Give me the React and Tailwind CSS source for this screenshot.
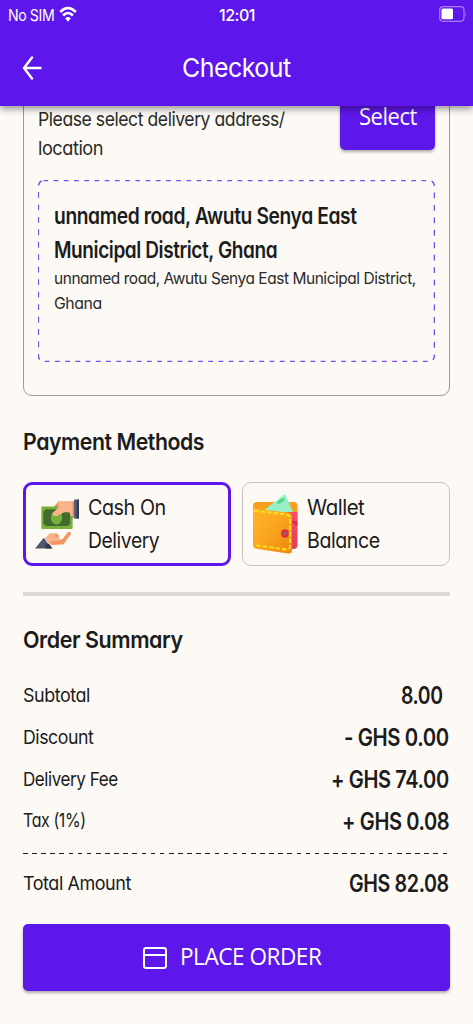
import { useLayoutEffect, useRef, useState } from 'react'
import clsx from 'clsx'

const CHARGES = [
  { label: 'Subtotal', labelWidth: 67, value: '8.00', valueWidth: 42, inset: true },
  { label: 'Discount', labelWidth: 70, value: '- GHS 0.00', valueWidth: 105 },
  { label: 'Delivery Fee', labelWidth: 95, value: '+ GHS 74.00', valueWidth: 118 },
  { label: 'Tax (1%)', labelWidth: 63, value: '+ GHS 0.08', valueWidth: 107 },
]

export default function App() {
  return (
    <div className="flex h-[1024px] w-[473px] flex-col overflow-hidden bg-[#fdfaf5] font-['Inter',sans-serif] tracking-[-0.03em] text-[#1c1c1c] [font-feature-settings:'cv11']">
      <Header />
      <main className="-mt-4 flex flex-col px-[23px]">
        <AddressCard />

        <h2 className="mt-[29px] h-[34px] text-[23.5px] leading-[34px] font-semibold"><Line width={181}>Payment Methods</Line></h2>
        <div className="mt-[23px] grid grid-cols-2 gap-[11px]">
          <Method icon={<CashIcon />} lines={[['Cash On', 78], ['Delivery', 71]]} active />
          <Method icon={<WalletIcon />} lines={[['Wallet', 57], ['Balance', 73]]} />
        </div>
        <div className="mt-[26px] h-1 bg-[#dddbd6]" />

        <h2 className="mt-[27px] h-[34px] text-[23.5px] leading-[34px] font-semibold"><Line width={160}>Order Summary</Line></h2>
        <div className="mt-[18.5px]">
          {CHARGES.map((row) => <Charge key={row.label} {...row} />)}
        </div>
        <div className="mt-2.5 h-[1.5px] bg-[repeating-linear-gradient(90deg,#1c1c1c_0_4.6px,transparent_4.6px_9.12px)]" />
        <div className="mt-[9px]">
          <Charge label="Total Amount" labelWidth={108} value="GHS 82.08" valueWidth={100} />
        </div>

        <button className="mt-[19px] flex h-[67px] items-center rounded-[5px] bg-[#5e17eb] pl-[120px] text-white shadow-[0_2px_3px_rgba(0,0,0,0.3)]">
          <svg width="24" height="24" viewBox="0 0 24 24" fill="none" stroke="currentColor" strokeWidth="2" className="mt-0.5">
            <rect x="1" y="2" width="22" height="20" rx="2.2" />
            <path d="M1 9h22" />
          </svg>
          <span className="-mt-0.5 ml-[13px] font-['Open_Sans',sans-serif] text-[23.5px] leading-8"><Line width={141}>PLACE ORDER</Line></span>
        </button>
      </main>
    </div>
  )
}

// Condenses a single line of text so that it takes exactly `width` pixels.
function Line({ width, children }) {
  const ref = useRef(null)
  const [scale, setScale] = useState(1)

  useLayoutEffect(() => {
    setScale(width / ref.current.offsetWidth)
  }, [width])

  return (
    <span className="block" style={{ width }}>
      <span ref={ref} className="inline-block origin-left whitespace-nowrap" style={{ transform: `scaleX(${scale})` }}>{children}</span>
    </span>
  )
}

function Header() {
  return (
    <header className="relative z-10 h-[106px] shrink-0 bg-[#5e17eb] text-white shadow-[0_3px_7px_rgba(0,0,0,0.4)]">
      <div className="grid h-[30px] grid-cols-[1fr_auto_1fr] items-center pr-[6px] pl-2 text-base leading-5">
        <div className="flex items-center gap-[5px]">
          <Line width={46}>No SIM</Line>
          <svg width="18" height="16" viewBox="0 0 18 16" className="-mt-0.5">
            <g fill="none" stroke="currentColor" strokeWidth="2.7">
              <path d="M1.2 6Q9-2 16.8 6" />
              <path d="M4.1 9.5Q9 4.5 13.9 9.5" />
            </g>
            <path d="M9 15.7 6.2 12.4Q9 9.8 11.8 12.4Z" fill="currentColor" />
          </svg>
        </div>
        <div className="-ml-px font-medium"><Line width={36}>12:01</Line></div>
        <svg width="28" height="16" viewBox="0 0 28 16" className="-mt-0.5 justify-self-end">
          <rect x="0.7" y="0.7" width="24.3" height="14.6" rx="3.5" fill="none" stroke="#a77cf5" strokeWidth="1.2" />
          <rect x="2.5" y="2.6" width="11.5" height="10.6" rx="1.5" fill="#fff" />
          <path d="M26.2 5.6q1.6 2.4 0 4.8Z" fill="#a77cf5" />
        </svg>
      </div>
      <div className="grid h-[76px] grid-cols-[1fr_auto_1fr] items-center px-[22px]">
        <svg width="20" height="24" viewBox="0 0 20 24" fill="none" stroke="currentColor" strokeWidth="2.4" strokeLinecap="round" strokeLinejoin="round">
          <path d="M18.5 12H2M10 1.5 2 12l8 10.5" />
        </svg>
        <h1 className="text-[26px] leading-9"><Line width={109}>Checkout</Line></h1>
      </div>
    </header>
  )
}

function AddressCard() {
  return (
    <section className="h-[306px] rounded-[9px] border border-[#9c9b98] px-[14px]">
      <div className="flex justify-between">
        <div className="pt-[14px] text-[19px] leading-[29px] text-[#2a2a2a]">
          <Line width={247}>Please select delivery address/</Line>
          <Line width={65}>location</Line>
        </div>
        <button className="flex h-[59px] w-[95px] items-center justify-center rounded-[5px] bg-[#5e17eb] font-['Open_Sans',sans-serif] text-[23.5px] leading-8 text-white shadow-[0_2px_3px_rgba(0,0,0,0.3)]">
          <span className="-mt-2.5"><Line width={58}>Select</Line></span>
        </button>
      </div>
      <div className="relative mt-[17px] h-[182px] px-4 pt-[19px]">
        <svg className="absolute inset-0 size-full" viewBox="0 0 399 150" preserveAspectRatio="none" fill="none" stroke="#7c4cf0" strokeWidth="1.4">
          <rect x="0.4" y="0.4" width="398" height="149.2" rx="5" strokeDasharray="4.8 5.47" />
        </svg>
        <div className="text-[22.5px] leading-[33.5px] font-semibold">
          <Line width={303}>unnamed road, Awutu Senya East</Line>
          <Line width={223}>Municipal District, Ghana</Line>
        </div>
        <div className="text-[16.5px] leading-[25px] text-[#2a2a2a]">
          <Line width={362}>unnamed road, Awutu Senya East Municipal District,</Line>
          <Line width={48}>Ghana</Line>
        </div>
      </div>
    </section>
  )
}

function Method({ icon, lines, active }) {
  return (
    <div className={clsx('flex h-[84px] items-center rounded-[9px]', active ? 'gap-[9px] border-[3px] border-[#5e17eb] pl-[9px]' : 'gap-2 border border-[#c5c4c1] pl-2')}>
      {icon}
      <div className="-mt-px text-[21.5px] leading-[33px]">
        {lines.map(([text, width]) => <Line key={text} width={width}>{text}</Line>)}
      </div>
    </div>
  )
}

function Charge({ label, labelWidth, value, valueWidth, inset }) {
  return (
    <div className="flex h-[41.75px] items-center justify-between">
      <span className="text-[19px]"><Line width={labelWidth}>{label}</Line></span>
      <span className={clsx('text-[24px] font-semibold', inset ? 'mr-[7px]' : 'mr-px')}><Line width={valueWidth}>{value}</Line></span>
    </div>
  )
}

function CashIcon() {
  return (
    <svg width="44" height="54" viewBox="0 0 45 54" className="shrink-0">
      <path d="M17 12 24 4h16v16l-4 2Z" fill="#ed9263" />
      <rect x="6.5" y="9" width="32" height="23" rx="1" fill="#77b23c" />
      <path d="M11 12h23l2 2.5v12L34 29H11l-2.5-2.5v-12Z" fill="#426b2d" />
      <ellipse cx="22" cy="20.5" rx="5.8" ry="7" fill="#77b23c" />
      <path d="M24 4h15.5v15H37l-2-4h-5l-8 4q-4 0-4-3l6-6Z" fill="#f9b48b" />
      <path d="M38.5 4h1.5v17l-1.5-1Z" fill="#e88755" />
      <path d="M40 2h4.5v19.5H40Z" fill="#4d566f" />
      <path d="M43 2h2v19.5h-2Z" fill="#363b53" />
      <path d="m10 42 5-5.5h7l3 3v3l5 1-7 5h-7Z" fill="#f9b48b" />
      <path d="m15 45 8-.5 5-2 5.5-7q2.500-1.500 3.500 1.500L29 48H17Z" fill="#f5965f" />
      <ellipse cx="22" cy="39" rx="2" ry="1.7" fill="#f29a68" />
      <path d="M0 52 9 41l8 11Z" fill="#4d566f" />
      <path d="m10 49 4-2 4 5h-7Z" fill="#363347" />
    </svg>
  )
}

function WalletIcon() {
  return (
    <svg width="48" height="62" viewBox="0 0 48 62" className="shrink-0">
      <defs>
        <linearGradient id="leather" x1="0" y1="0" x2="1" y2="1">
          <stop stopColor="#ffb72e" />
          <stop offset=".5" stopColor="#faa51e" />
          <stop offset="1" stopColor="#ed8610" />
        </linearGradient>
        <linearGradient id="lining" x1="0" y1="0" x2="0" y2="1">
          <stop stopColor="#fc506a" />
          <stop offset="1" stopColor="#df3e55" />
        </linearGradient>
      </defs>
      <rect x="2" y="9" width="44.5" height="20" rx="4" fill="#f89e20" />
      <path d="M30 19h16.5v33q0 4-4 4H30Z" fill="url(#lining)" />
      <path d="M39 28h7.5v5L40 29Z" fill="#cf354d" />
      <path d="M12 18 34 1l8 18H24Z" fill="#96efc5" />
      <path d="m27.5 9.5 4.5-3" stroke="#50d58c" strokeWidth="3" strokeLinecap="round" />
      <path d="M2 13q1 2.5 4 3l31 3.5q4 .5 4 5V57q0 4-4 3.5L6 56q-4-.5-4-4Z" fill="url(#leather)" />
      <path d="m3 17.5 32 4q4 .5 4 4V53q0 4-4 3.5L3 52" fill="none" stroke="#ffe21b" strokeWidth="1.9" strokeDasharray="4.5 2" />
      <ellipse cx="34" cy="40.5" rx="3.9" ry="4.3" fill="#d92d49" />
      <circle cx="34" cy="40.5" r="2.1" fill="#a95662" />
    </svg>
  )
}
